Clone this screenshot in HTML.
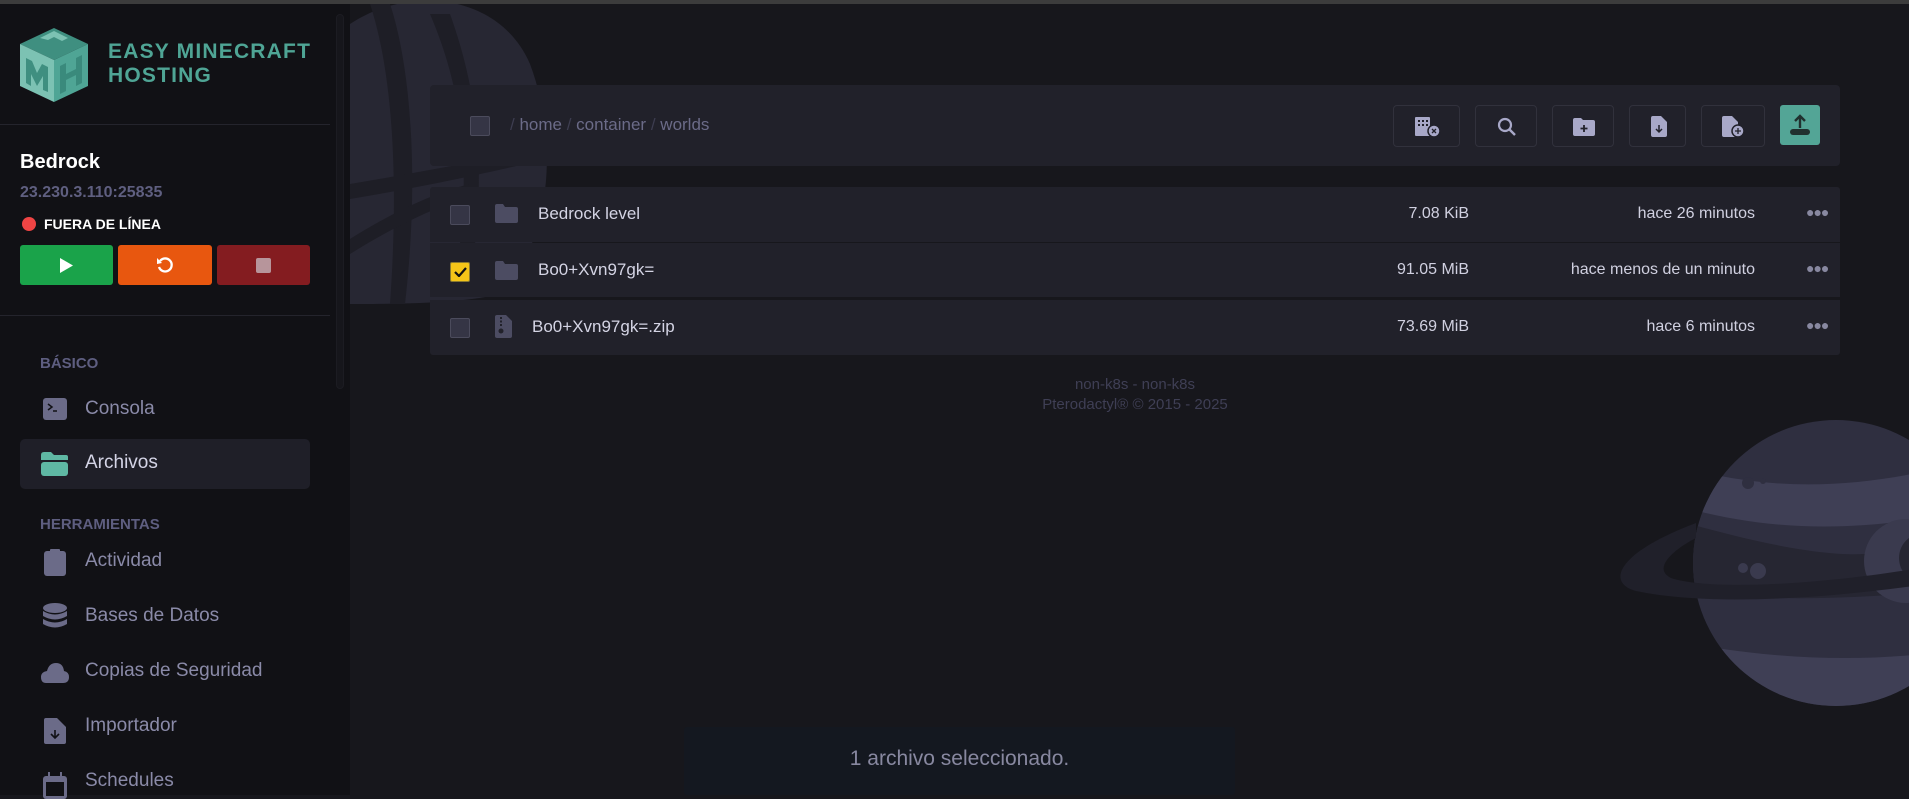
<!DOCTYPE html>
<html><head><meta charset="utf-8"><style>
*{box-sizing:border-box;margin:0;padding:0}
body{width:1909px;height:795px;overflow:hidden;background:#17171c;font-family:"Liberation Sans",sans-serif;position:relative}
.topbar{position:absolute;left:0;top:0;width:1909px;height:4px;background:#3c3c3c}
.side{position:absolute;left:0;top:4px;width:350px;height:791px;background:#111115}
.scroll{position:absolute;left:336px;top:10px;width:8px;height:375px;border-radius:4px;background:#16161b;border:1px solid #1c1c22}
.abs{position:absolute}
.hr{position:absolute;left:0;width:330px;height:1px;background:#24242c}
.nav{position:absolute;left:85px;font-size:19px;color:#8a8aa8}
.sec{position:absolute;left:40px;font-size:15px;font-weight:bold;color:#5e5e80}
.btn{position:absolute;top:245px;height:40px;border-radius:3px}
.card{position:absolute;left:430px;width:1410px;background:#21212a}
.cb{position:absolute;width:20px;height:20px;border:1px solid #4b4b5c;background:#353545;border-radius:2px}
.tb{position:absolute;top:105px;height:42px;border:1px solid #31313c;border-radius:4px}
.name{position:absolute;left:538px;font-size:17px;color:#d4d4e4}
.size{position:absolute;right:440px;font-size:16px;color:#d0d0e0}
.date{position:absolute;right:154px;font-size:16px;color:#d0d0e0}
.dots{position:absolute;left:1806px;font-size:14px;color:#8888a0;letter-spacing:-1px}
</style></head><body>
<div class="topbar"></div>
<svg class="abs" style="left:350px;top:4px" width="1559" height="791">
<g fill="#272733">
<path d="M0 20 C60 -20 150 -10 180 60 C210 140 200 240 150 290 C110 300 40 300 0 300 Z"/>
</g>
<g fill="#1e1e26">
<path d="M20 0 C40 60 50 160 40 300 L55 300 C70 170 60 60 40 0Z"/>
<path d="M80 10 C110 80 120 150 110 240 L125 240 C135 150 125 80 100 10Z"/>
<path d="M0 180 C60 170 110 160 170 150 L175 160 C110 175 60 185 0 195Z"/>
<path d="M0 235 C40 210 80 190 120 180 L125 190 C80 205 40 225 0 250Z"/>
</g>
<g transform="translate(1486,559)">
<clipPath id="pc"><circle r="143"/></clipPath>
<circle r="143" fill="#2f2f40"/>
<g clip-path="url(#pc)">
<path d="M-150 -95 C-40 -65 60 -80 160 -110 L160 -60 C60 -35 -40 -25 -150 -55Z" fill="#3f3f55"/>
<path d="M-150 -40 C-60 -15 0 -5 40 -10 C70 -60 140 -60 160 -30 L160 20 C60 35 -40 40 -150 30Z" fill="#262632"/>
<path d="M-150 80 C-40 100 60 100 160 80 L160 160 L-150 160Z" fill="#3f3f55"/>
<circle cx="70" cy="-2" r="42" fill="#3a3a4e"/>
<circle cx="88" cy="-5" r="25" fill="#262632"/>
<circle cx="-88" cy="-80" r="6" fill="#2f2f40"/>
<circle cx="-73" cy="-82" r="3" fill="#2f2f40"/>
<circle cx="-93" cy="5" r="5" fill="#3a3a4e"/>
<circle cx="-78" cy="8" r="8" fill="#3a3a4e"/>
</g>
<path d="M-140 -40 C-220 -10 -230 20 -200 28 C-120 45 20 35 160 10 L160 -10 C30 20 -120 30 -165 15 C-185 5 -160 -15 -140 -25Z" fill="#20202a"/>
</g>
</svg>
<div class="side">
<div class="scroll"></div>
<svg class="abs" style="left:20px;top:24px" width="68" height="74" viewBox="0 0 68 74">
<path d="M0 16 L34 0 L68 16 L34 32Z" fill="#3f8f80"/>
<path d="M0 16 L34 32 L34 74 L0 58Z" fill="#7cc2b3"/>
<path d="M34 32 L68 16 L68 58 L34 74Z" fill="#4fa595"/>
<path d="M6 30 L12 33 L17 45 L22 36 L28 39 L28 64 L23 62 L23 48 L17 58 L11 46 L11 58 L6 55Z" fill="#3f8f80"/>
<path d="M40 38 L46 35 L46 46 L56 41 L56 30 L62 27 L62 55 L56 58 L56 47 L46 52 L46 63 L40 66Z" fill="#3a8a7c"/>
<path d="M20 10 L34 3 L48 10 L42 13 L34 9 L28 12Z" fill="#7cc2b3"/>
</svg>
<div class="abs" style="left:108px;top:36px;font-size:21px;font-weight:bold;color:#4fa595;line-height:24px;letter-spacing:1.2px">EASY MINECRAFT<br>HOSTING</div>
<div class="hr" style="top:120px"></div>
<div class="abs" style="left:20px;top:147px;font-size:20px;font-weight:bold;color:#fff">Bedrock</div>
<div class="abs" style="left:20px;top:180px;font-size:16px;font-weight:bold;color:#5f5f80">23.230.3.110:25835</div>
<div class="abs" style="left:22px;top:213px;width:14px;height:14px;border-radius:50%;background:#ef4444"></div>
<div class="abs" style="left:44px;top:212px;font-size:14px;font-weight:bold;color:#fff">FUERA DE LÍNEA</div>
<div class="btn" style="left:20px;width:93px;top:241px;background:#1aa34a"><svg class="abs" style="left:39px;top:13px" width="15" height="15"><path d="M1 0 L14 7.5 L1 15Z" fill="#fff"/></svg></div>
<div class="btn" style="left:118px;width:94px;top:241px;background:#e8570f"><svg class="abs" style="left:38px;top:11px" width="18" height="18" viewBox="0 0 18 18"><path d="M4 5 A6.5 6.5 0 1 1 3 11" stroke="#fff" stroke-width="2.3" fill="none"/><path d="M1 2 L6 7 L1 8Z" fill="#fff"/></svg></div>
<div class="btn" style="left:217px;width:93px;top:241px;background:#841c20"><div class="abs" style="left:39px;top:13px;width:15px;height:15px;border-radius:2px;background:#b7959b"></div></div>
<div class="hr" style="top:311px"></div>
<div class="sec" style="top:351px">BÁSICO</div>
<svg class="abs" style="left:43px;top:394px" width="24" height="22"><rect width="24" height="22" rx="3" fill="#6b6b88"/><path d="M5 6 L9 9 L5 12" stroke="#111115" stroke-width="1.5" fill="none"/><path d="M10 13 H14" stroke="#111115" stroke-width="1.5"/></svg>
<div class="nav" style="top:394px">Consola</div>
<div class="abs" style="left:20px;top:435px;width:290px;height:50px;border-radius:5px;background:#1f1f28"></div>
<svg class="abs" style="left:41px;top:448px" width="28" height="24"><path d="M0 3 Q0 0 3 0 H10 L13 3 H25 Q27 3 27 5 V8 H0Z" fill="#5fb8a4"/><rect y="10" width="27" height="14" rx="3" fill="#5fb8a4"/></svg>
<div class="nav" style="top:448px;color:#d4d4e6">Archivos</div>
<div class="sec" style="top:512px">HERRAMIENTAS</div>
<svg class="abs" style="left:44px;top:545px" width="22" height="27"><rect y="2" width="22" height="25" rx="3" fill="#6b6b88"/><rect x="6" y="0" width="10" height="4" rx="1" fill="#6b6b88"/></svg>
<div class="nav" style="top:546px">Actividad</div>
<svg class="abs" style="left:43px;top:599px" width="24" height="28"><ellipse cx="12" cy="5" rx="12" ry="5" fill="#6b6b88"/><path d="M0 8 Q12 15 24 8 V13 Q12 20 0 13Z" fill="#6b6b88"/><path d="M0 16 Q12 23 24 16 V21 Q12 28 0 21Z" fill="#6b6b88"/></svg>
<div class="nav" style="top:601px">Bases de Datos</div>
<svg class="abs" style="left:41px;top:659px" width="28" height="20"><path d="M5 20 Q0 20 0 14 Q0 9 6 8 Q8 0 15 0 Q22 0 23 8 Q28 9 28 14 Q28 20 22 20Z" fill="#6b6b88"/></svg>
<div class="nav" style="top:656px">Copias de Seguridad</div>
<svg class="abs" style="left:44px;top:714px" width="22" height="26"><path d="M2 0 H13 L22 9 V24 Q22 26 20 26 H2 Q0 26 0 24 V2 Q0 0 2 0Z" fill="#6b6b88"/><path d="M11 12 V20 M7 16 L11 20 L15 16" stroke="#111115" stroke-width="1.6" fill="none"/></svg>
<div class="nav" style="top:711px">Importador</div>
<svg class="abs" style="left:43px;top:768px" width="24" height="27"><rect y="4" width="24" height="23" rx="3" fill="#6b6b88"/><rect x="3" y="10" width="18" height="14" fill="#111115"/><rect x="5" y="0" width="2" height="6" fill="#6b6b88"/><rect x="17" y="0" width="2" height="6" fill="#6b6b88"/></svg>
<div class="nav" style="top:766px">Schedules</div>
</div>

<div class="card" style="top:85px;height:81px;border-radius:4px"></div>
<div class="cb" style="left:470px;top:116px"></div>
<div class="abs" style="left:510px;top:115px;font-size:17px;color:#6b6b88"><span style="color:#3d3d50">/ </span>home <span style="color:#3d3d50">/</span> container <span style="color:#3d3d50">/</span> worlds</div>
<div class="tb" style="left:1393px;width:67px"><svg class="abs" style="left:21px;top:11px" width="26" height="20"><rect x="0" y="0" width="15" height="19" rx="1" fill="#a8a8c8"/><g fill="#21212a"><rect x="3" y="3" width="2" height="2"/><rect x="7" y="3" width="2" height="2"/><rect x="11" y="3" width="2" height="2"/><rect x="3" y="7" width="2" height="2"/><rect x="7" y="7" width="2" height="2"/><rect x="11" y="7" width="2" height="2"/></g><circle cx="19" cy="14" r="6" fill="#a8a8c8" stroke="#21212a" stroke-width="1.5"/><path d="M17 12 L21 16 M21 12 L17 16" stroke="#21212a" stroke-width="1.3"/></svg></div>
<div class="tb" style="left:1475px;width:62px"><svg class="abs" style="left:21px;top:11px" width="20" height="20"><circle cx="8" cy="8" r="6" stroke="#a8a8c8" stroke-width="2.2" fill="none"/><path d="M12.5 12.5 L18 18" stroke="#a8a8c8" stroke-width="2.4"/></svg></div>
<div class="tb" style="left:1552px;width:62px"><svg class="abs" style="left:20px;top:12px" width="22" height="18"><path d="M0 2 Q0 0 2 0 H8 L10 2 H20 Q22 2 22 4 V16 Q22 18 20 18 H2 Q0 18 0 16Z" fill="#a8a8c8"/><path d="M11 7 V14 M7.5 10.5 H14.5" stroke="#21212a" stroke-width="1.8"/></svg></div>
<div class="tb" style="left:1629px;width:57px"><svg class="abs" style="left:21px;top:10px" width="16" height="21"><path d="M2 0 H10 L16 6 V19 Q16 21 14 21 H2 Q0 21 0 19 V2 Q0 0 2 0Z" fill="#a8a8c8"/><path d="M8 9 V16 M5 13 L8 16 L11 13" stroke="#21212a" stroke-width="1.5" fill="none"/></svg></div>
<div class="tb" style="left:1701px;width:64px"><svg class="abs" style="left:20px;top:10px" width="24" height="22"><path d="M2 0 H10 L16 6 V19 Q16 21 14 21 H2 Q0 21 0 19 V2 Q0 0 2 0Z" fill="#a8a8c8"/><circle cx="16" cy="15" r="6" fill="#a8a8c8" stroke="#21212a" stroke-width="1.5"/><path d="M16 12 V18 M13 15 H19" stroke="#21212a" stroke-width="1.3"/></svg></div>
<div class="abs" style="left:1780px;top:105px;width:40px;height:40px;border-radius:3px;background:#53a596"><svg class="abs" style="left:10px;top:9px" width="20" height="22"><path d="M10 14 V2 M5 7 L10 2 L15 7" stroke="#21312f" stroke-width="2.4" fill="none"/><rect x="0" y="15" width="20" height="6" rx="3" fill="#21312f"/></svg></div>

<div class="card" style="top:187px;height:55px;border-radius:3px 3px 0 0"></div>
<div class="card" style="top:243px;height:54px"></div>
<div class="card" style="top:300px;height:55px;border-radius:0 0 3px 3px"></div>
<div class="cb" style="left:450px;top:205px"></div>
<div class="cb" style="left:450px;top:262px;background:#f5c518;border-color:#8a7a30"><svg class="abs" style="left:3px;top:4px" width="13" height="10"><path d="M1 5 L5 9 L12 1" stroke="#111" stroke-width="2.2" fill="none"/></svg></div>
<div class="cb" style="left:450px;top:318px"></div>
<svg class="abs" style="left:495px;top:204px" width="23" height="19"><path d="M0 2 Q0 0 2 0 H8 L10 3 H21 Q23 3 23 5 V17 Q23 19 21 19 H2 Q0 19 0 17Z" fill="#4c4c62"/></svg>
<svg class="abs" style="left:495px;top:261px" width="23" height="19"><path d="M0 2 Q0 0 2 0 H8 L10 3 H21 Q23 3 23 5 V17 Q23 19 21 19 H2 Q0 19 0 17Z" fill="#4c4c62"/></svg>
<svg class="abs" style="left:495px;top:315px" width="17" height="23"><path d="M2 0 H11 L17 6 V21 Q17 23 15 23 H2 Q0 23 0 21 V2 Q0 0 2 0Z" fill="#4c4c62"/><path d="M6 2 V12" stroke="#21212a" stroke-width="2" stroke-dasharray="2 1.5"/><circle cx="6" cy="16" r="2.5" fill="#21212a"/></svg>
<div class="name" style="top:204px">Bedrock level</div>
<div class="name" style="top:260px">Bo0+Xvn97gk=</div>
<div class="name" style="top:317px;left:532px">Bo0+Xvn97gk=.zip</div>
<div class="size" style="top:205px">7.08 KiB</div>
<div class="size" style="top:261px">91.05 MiB</div>
<div class="size" style="top:318px">73.69 MiB</div>
<div class="date" style="top:205px">hace 26 minutos</div>
<div class="date" style="top:261px">hace menos de un minuto</div>
<div class="date" style="top:318px">hace 6 minutos</div>
<div class="dots" style="top:204px">●●●</div>
<div class="dots" style="top:260px">●●●</div>
<div class="dots" style="top:317px">●●●</div>

<div class="abs" style="left:935px;width:400px;top:375px;text-align:center;font-size:15px;line-height:20px;color:#3f3f55">non-k8s - non-k8s<br>Pterodactyl® © 2015 - 2025</div>

<div class="abs" style="left:684px;top:727px;width:551px;height:68px;background:#141820;border-radius:3px"></div>
<div class="abs" style="left:684px;width:551px;top:747px;text-align:center;font-size:21px;color:#8888a0">1 archivo seleccionado.</div>
</body></html>
